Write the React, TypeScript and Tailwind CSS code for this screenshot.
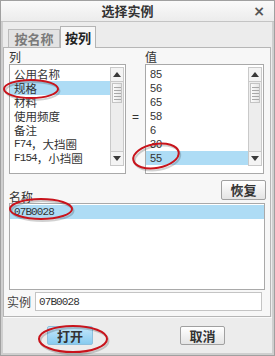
import React from "react";

const cjk = "font-['Noto_Sans_CJK_SC','Noto_Sans',sans-serif]";
const mono = "font-['Liberation_Mono',monospace] text-[11px] tracking-[-0.9px]";

function Tri({ down }: { down?: boolean }) {
  return (
    <svg width="8" height="5" viewBox="0 0 8 5">
      {down ? <polygon points="0,0 8,0 4,5" fill="#3a3a3a" /> : <polygon points="0,5 8,5 4,0" fill="#3a3a3a" />}
    </svg>
  );
}

function Scrollbar() {
  return (
    <div className="w-[14px] h-[99px] mt-[2px] mr-[1px] border border-[#c9c9c9] bg-[#ededed] flex flex-col">
      <div className="h-[14px] border-b border-[#c9c9c9] bg-[#f4f4f4] flex items-center justify-center">
        <Tri />
      </div>
      <div className="mt-[1px] mx-[1px] h-[20px] border border-[#c4c4c4] bg-gradient-to-r from-[#fbfbfb] to-[#e6e6e6] flex flex-col items-center justify-center gap-[2px]">
        {[0, 1, 2, 3, 4].map((i) => (
          <div key={i} className="w-[7px] h-px bg-[#a8a8a8]" />
        ))}
      </div>
      <div className="flex-1" />
      <div className="h-[14px] border-t border-[#c9c9c9] bg-[#f4f4f4] flex items-center justify-center">
        <Tri down />
      </div>
    </div>
  );
}

type Item = { a?: string; c?: string };

export default function App() {
  const cols: Item[] = [
    { c: "公用名称" },
    { c: "规格" },
    { c: "材料" },
    { c: "使用频度" },
    { c: "备注" },
    { a: "F74", c: "，大挡圈" },
    { a: "F154", c: "，小挡圈" },
  ];
  const vals = ["85", "56", "65", "58", "6", "30", "55"];

  return (
    <div className="relative w-[275px] h-[356px] border border-[#a0a0a0] bg-[#cfcfcf] flex flex-col overflow-hidden text-[#333]">
      {/* title bar */}
      <div className="h-[21px] shrink-0 bg-gradient-to-b from-[#fafafa] to-[#ececec] border-b border-[#c4c4c4] flex items-center relative">
        <div className={`${cjk} flex-1 text-center pr-[20px] text-[13px] font-bold leading-[16px] text-[#333]`}>选择实例</div>
        <div className="absolute right-[9px] top-[2px] text-[14px] font-bold text-[#555] font-['DejaVu_Sans',sans-serif] leading-[16px]">×</div>
      </div>

      {/* body */}
      <div className="flex-1 mx-[2px] mb-[2px] bg-[#ececec] flex flex-col">
        {/* tabs */}
        <div className="h-[25px] shrink-0 flex items-end pl-[5px]">
          <div className={`${cjk} w-[52px] h-[18px] border border-b-0 border-[#bcbcbc] bg-[#e3e3e3] text-[13px] font-bold text-[#7a7a7a] leading-[16px] flex items-center justify-center`}>
            按名称
          </div>
          <div className={`${cjk} relative z-10 -mb-px w-[36px] h-[22px] border border-b-0 border-[#b4b4b4] bg-[#f7f7f7] text-[13px] font-bold text-[#222] leading-[16px] flex items-center justify-center`}>
            按列
          </div>
        </div>

        {/* panel */}
        <div className="h-[270px] shrink-0 mr-px border border-[#b6b6b6] bg-[#f7f7f7] flex flex-col">
          {/* labels */}
          <div className={`${cjk} h-[16px] flex text-[12px] leading-[14px] pt-[2px]`}>
            <div className="ml-[5px] w-[136px]">列</div>
            <div>值</div>
          </div>
          {/* lists */}
          <div className="h-[110px] flex">
            <div className="ml-[5px] w-[117px] h-[110px] border border-[#a9a9a9] bg-white flex">
              <div className="flex-1 pt-[2px]">
                {cols.map((it, i) => (
                  <div key={i} className={`h-[14px] pl-[4px] flex items-center whitespace-nowrap overflow-hidden ${i === 1 ? "bg-[#aedcf5]" : ""}`}>
                    {it.a && <span className={`${mono} text-[#333] leading-[13px]`}>{it.a}</span>}
                    <span className={`${cjk} text-[11.5px] leading-[13px] text-[#333]`}>{it.c}</span>
                  </div>
                ))}
              </div>
              <Scrollbar />
            </div>
            <div className="w-[19px] flex items-center justify-center pb-[4px] text-[12px] font-['Liberation_Sans',sans-serif]">=</div>
            <div className="w-[119px] h-[110px] border border-[#a9a9a9] bg-white flex">
              <div className="flex-1 pt-[2px]">
                {vals.map((v, i) => (
                  <div key={i} className={`h-[14px] pl-[4px] flex items-center font-['Liberation_Sans',sans-serif] text-[11px] leading-[13px] text-[#333] ${i === 6 ? "bg-[#aedcf5]" : ""}`}>
                    {v}
                  </div>
                ))}
              </div>
              <Scrollbar />
            </div>
          </div>
          {/* name label + restore */}
          <div className="h-[29px] flex justify-between">
            <div className={`${cjk} self-end ml-[5px] text-[12px] leading-[13px]`}>名称</div>
            <div className={`${cjk} mt-[6px] mr-[4px] w-[45px] h-[20px] border border-[#a0a0a0] rounded-[2px] bg-gradient-to-b from-[#ffffff] to-[#e4e4e4] text-[13px] font-bold leading-[16px] text-[#333] flex items-center justify-center`}>
              恢复
            </div>
          </div>
          {/* names list */}
          <div className="ml-[5px] w-[256px] h-[87px] border border-[#a9a9a9] bg-white pt-px">
            <div className="h-[14px] bg-[#aedcf5] pl-[4px] flex items-center">
              <span className={`${mono} leading-[14px] text-[#333]`}>07B0028</span>
            </div>
          </div>
          {/* instance input */}
          <div className="mt-[2px] h-[19px] flex items-center">
            <div className={`${cjk} ml-[3px] w-[28px] text-[12px] leading-[14px] text-[#444]`}>实例</div>
            <div className="w-[227px] h-[19px] border border-[#c4c4c4] bg-white pl-[3px] flex items-center">
              <span className={`${mono} leading-[14px] text-[#333]`}>07B0028</span>
            </div>
          </div>
        </div>

        {/* buttons */}
        <div className="flex-1 border-t border-[#fafafa] flex items-start pt-[8px]">
          <div className={`${cjk} ml-[44px] w-[46px] h-[19px] border border-[#8ec0dd] rounded-[2px] bg-gradient-to-b from-[#c3e7fa] to-[#88cbef] text-[13px] font-bold leading-[16px] text-[#333] flex items-center justify-center`}>
            打开
          </div>
          <div className={`${cjk} ml-[87px] w-[45px] h-[19px] border border-[#a0a0a0] rounded-[2px] bg-gradient-to-b from-[#ffffff] to-[#e4e4e4] text-[13px] font-bold leading-[16px] text-[#333] flex items-center justify-center`}>
            取消
          </div>
        </div>
      </div>

      {/* annotations */}
      <svg className="absolute left-[-1px] top-[-1px] pointer-events-none" width="275" height="356" viewBox="0 0 275 356">
        <g fill="none" strokeWidth="2">
          <g stroke="rgba(0,0,0,0.18)" transform="translate(1.5,2)">
            <ellipse cx="31" cy="89" rx="27" ry="9" />
            <ellipse cx="156" cy="156" rx="23" ry="12" transform="rotate(-10 156 156)" />
            <ellipse cx="41" cy="209" rx="31" ry="10" />
            <ellipse cx="73" cy="339" rx="34" ry="13" />
          </g>
          <g stroke="#c8141c">
            <ellipse cx="31" cy="89" rx="27" ry="9" />
            <ellipse cx="156" cy="156" rx="23" ry="12" transform="rotate(-10 156 156)" />
            <ellipse cx="41" cy="209" rx="31" ry="10" />
            <ellipse cx="73" cy="339" rx="34" ry="13" />
          </g>
        </g>
      </svg>
    </div>
  );
}
